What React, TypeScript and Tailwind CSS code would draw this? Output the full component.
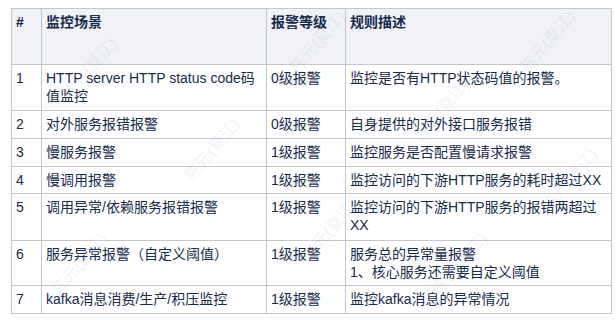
import React from "react";

type Row = { n: string; scene: React.ReactNode; level: string; desc: React.ReactNode; h: number };

const rows: Row[] = [
  { n: "1", scene: <>HTTP server HTTP status code码<br />值监控</>, level: "0级报警", desc: "监控是否有HTTP状态码值的报警。", h: 46 },
  { n: "2", scene: "对外服务报错报警", level: "0级报警", desc: "自身提供的对外接口服务报错", h: 28 },
  { n: "3", scene: "慢服务报警", level: "1级报警", desc: "监控服务是否配置慢请求报警", h: 28 },
  { n: "4", scene: "慢调用报警", level: "1级报警", desc: "监控访问的下游HTTP服务的耗时超过XX", h: 27 },
  { n: "5", scene: "调用异常/依赖服务报错报警", level: "1级报警", desc: <>监控访问的下游HTTP服务的报错两超过<br />XX</>, h: 47 },
  { n: "6", scene: "服务异常报警（自定义阈值）", level: "1级报警", desc: <>服务总的异常量报警<br />1、核心服务还需要自定义阈值</>, h: 45 },
  { n: "7", scene: "kafka消息消费/生产/积压监控", level: "1级报警", desc: "监控kafka消息的异常情况", h: 28 },
];

const marks: [number, number][] = [
  [90, 67], [318, 40], [548, 40], [213, 148], [442, 108], [80, 262], [330, 228], [570, 178], [460, 262],
];

export default function App() {
  const cell = "border border-[#c1c7d0] align-top pt-[4px] px-[4px] leading-[18px]";
  return (
    <div className="relative w-[615px] h-[320px] bg-white overflow-hidden text-[14px] text-[#172b4d]" style={{ fontFamily: '"Liberation Sans", "Noto Sans CJK SC", sans-serif' }}>
      <div className="pt-[8px] pl-[11px]">
        <table className="border-collapse table-fixed w-[600px]">
          <colgroup>
            <col className="w-[30px]" />
            <col className="w-[225px]" />
            <col className="w-[79px]" />
            <col className="w-[266px]" />
          </colgroup>
          <thead>
            <tr className="bg-[#f1f2f6] h-[56px]">
              <th className={`${cell} text-left font-bold`}>#</th>
              <th className={`${cell} text-left font-bold`}>监控场景</th>
              <th className={`${cell} text-left font-bold`}>报警等级</th>
              <th className={`${cell} text-left font-bold`}>规则描述</th>
            </tr>
          </thead>
          <tbody>
            {rows.map((r) => (
              <tr key={r.n} style={{ height: r.h }}>
                <td className={cell}>{r.n}</td>
                <td className={cell}>{r.scene}</td>
                <td className={cell}>{r.level}</td>
                <td className={cell}>{r.desc}</td>
              </tr>
            ))}
          </tbody>
        </table>
      </div>
      <div className="pointer-events-none absolute inset-0">
        {marks.map(([x, y], i) => (
          <div
            key={i}
            className="absolute text-[16px] whitespace-nowrap text-[rgba(120,130,150,0.12)] -rotate-[50deg]"
            style={{ left: x - 50, top: y - 10, width: 100, textAlign: "center" }}
          >
            陈元(夏江)
          </div>
        ))}
      </div>
    </div>
  );
}
